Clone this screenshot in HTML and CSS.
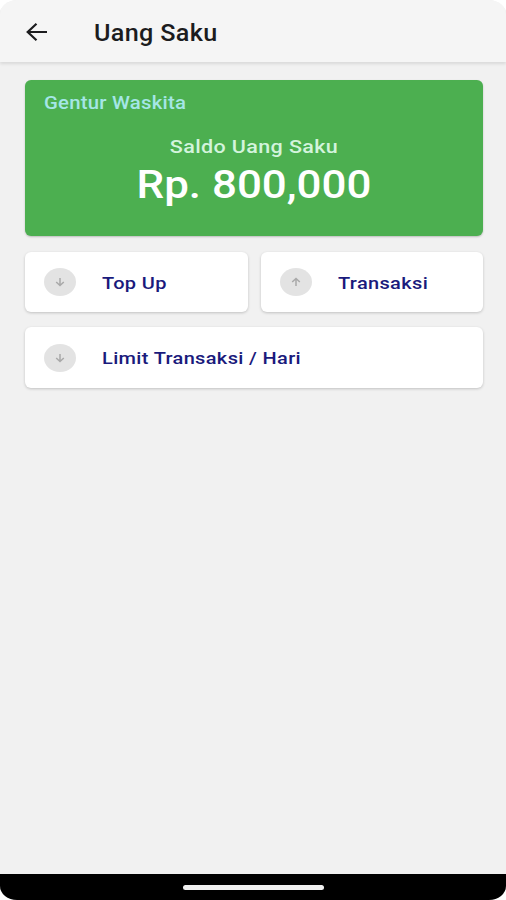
FILE: index.html
```html
<!DOCTYPE html>
<html lang="id">
<head>
<meta charset="utf-8">
<title>Uang Saku</title>
<link rel="stylesheet" href="styles.css">
</head>
<body>
<div class="screen">
  <header class="appbar">
    <svg class="back" width="22" height="20" viewBox="0 0 22 20"><path d="M21 10H2M10.5 1.7L1.7 10l8.8 8.3"/></svg>
    <h1 class="title">Uang Saku</h1>
  </header>
  <main class="content">
    <section class="balance">
      <div class="owner">Gentur Waskita</div>
      <div class="caption">Saldo Uang Saku</div>
      <div class="amount">Rp. 800,000</div>
    </section>
    <nav class="actions">
      <a class="card">
        <span class="badge"><svg width="10" height="10" viewBox="0 0 10 10"><path d="M5 1v7.5M1.2 5L5 8.5 8.8 5"/></svg></span>
        <span class="label">Top Up</span>
      </a>
      <a class="card">
        <span class="badge"><svg width="10" height="10" viewBox="0 0 10 10"><path d="M5 9V1.5M1.2 5L5 1.5 8.8 5"/></svg></span>
        <span class="label">Transaksi</span>
      </a>
      <a class="card wide">
        <span class="badge"><svg width="10" height="10" viewBox="0 0 10 10"><path d="M5 1v7.5M1.2 5L5 8.5 8.8 5"/></svg></span>
        <span class="label">Limit Transaksi / Hari</span>
      </a>
    </nav>
  </main>
  <footer class="navbar"><div class="handle"></div></footer>
</div>
</body>
</html>
```

FILE: styles.css
```css
* { box-sizing: border-box; }
body {
  margin: 0;
  background: #fff;
  font-family: Roboto, "Liberation Sans", sans-serif;
  font-weight: 500;
}
.screen {
  display: flex;
  flex-direction: column;
  width: 506px;
  height: 900px;
  overflow: hidden;
  background: #f1f1f1;
  border-radius: 18px 18px 17px 17px / 14px 14px 14px 14px;
}
.appbar {
  display: flex;
  align-items: center;
  height: 62px;
  padding: 2px 0 0 26px;
  background: #f5f5f5;
  box-shadow: 0 2px 3px rgba(0, 0, 0, .1);
}
.back { fill: none; stroke: #1c1c1e; stroke-width: 2.2; }
.title {
  margin: 4px 0 0 46px;
  font-size: 23px;
  font-weight: 500;
  line-height: 30px;
  color: #1c1c1e;
  letter-spacing: .3px;
  transform: scaleX(1.095);
  transform-origin: left;
}
.content { flex: 1; padding: 18px 23px 0 25px; }
.balance {
  height: 156px;
  padding: 12px 19px;
  background: #4caf50;
  border-radius: 6px;
  box-shadow: 0 1px 2px rgba(0, 0, 0, .22);
  text-align: center;
}
.owner {
  width: max-content;
  font-size: 18px;
  line-height: 22px;
  color: #a5e6e6;
  letter-spacing: .2px;
  transform: scaleX(1.13);
  transform-origin: left;
}
.caption {
  margin-top: 22px;
  font-size: 17.5px;
  line-height: 22px;
  color: #d3f4dc;
  letter-spacing: .3px;
  transform: scaleX(1.23);
}
.amount {
  font-size: 39px;
  line-height: 54px;
  color: #fff;
  transform: scaleX(1.125);
}
.actions {
  display: grid;
  grid-template-columns: 1fr 1fr;
  gap: 15px 13px;
  margin-top: 16px;
}
.card {
  display: flex;
  align-items: center;
  height: 60px;
  padding-left: 19px;
  background: #fff;
  border-radius: 6px;
  box-shadow: 0 1px 3px rgba(0, 0, 0, .2);
}
.wide { grid-column: span 2; height: 61px; }
.badge {
  display: flex;
  align-items: center;
  justify-content: center;
  width: 32px;
  height: 28px;
  border-radius: 50%;
  background: #e3e3e3;
}
.badge svg { fill: none; stroke: #a9a9a9; stroke-width: 1.5; }
.label {
  margin: 1px 0 0 26px;
  font-size: 17px;
  line-height: 22px;
  white-space: nowrap;
  color: #1a1a7c;
  letter-spacing: .3px;
  transform: scaleX(1.175);
  transform-origin: left;
}
.navbar {
  display: flex;
  justify-content: center;
  height: 26px;
  padding-top: 11px;
  background: #000;
}
.handle { width: 141px; height: 5px; border-radius: 3px; background: #f0f0f0; }
```
